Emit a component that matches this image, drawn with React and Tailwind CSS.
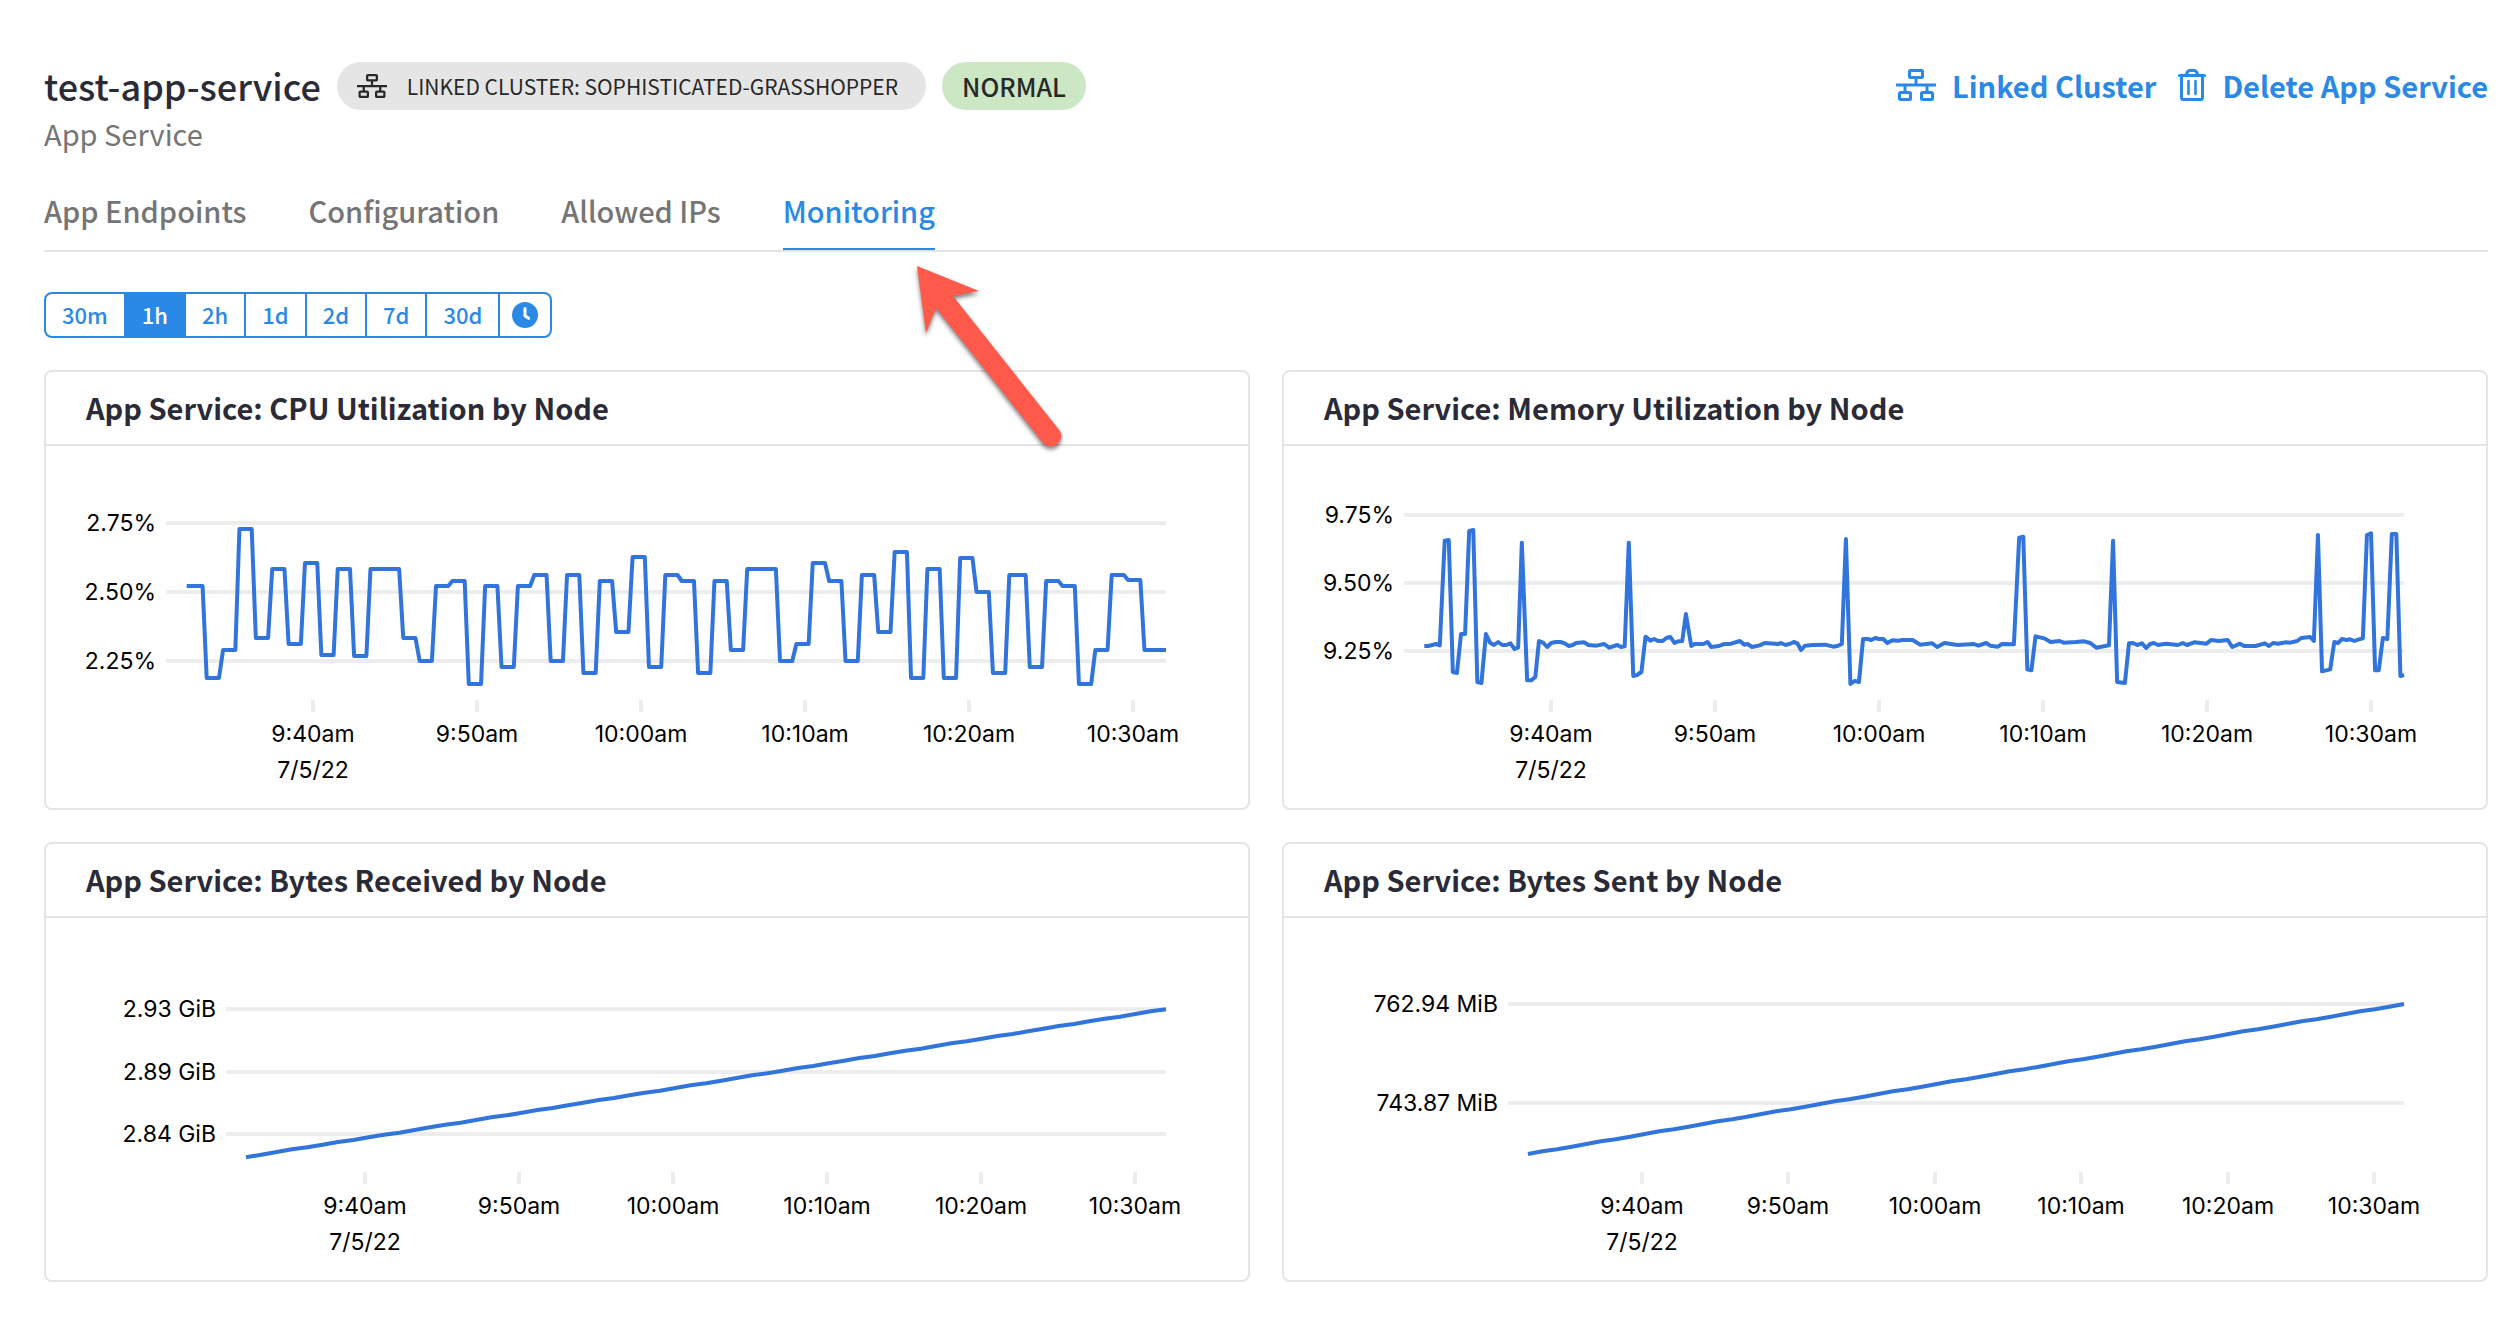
import React, { useState } from "react";

const GRID = "#ededed";
const LINE = "#3174dc";

const HOURS = ["9:40am", "9:50am", "10:00am", "10:10am", "10:20am", "10:30am"];

/* CPU readings: [level, number of 15-second samples] */
const CPU_RUNS = [
  [678, 4], [954, 4], [870, 4], [507, 4], [834, 4], [627, 4], [852, 4], [609, 4], [885, 4], [627, 4],
  [888, 4], [627, 8], [834, 4], [903, 4], [678, 4], [663, 4], [972, 4], [678, 4], [921, 4], [678, 4],
  [645, 4], [903, 4], [645, 4], [939, 4], [663, 4], [816, 4], [591, 4], [921, 4], [645, 4], [663, 4],
  [939, 4], [663, 4], [870, 4], [627, 8], [903, 4], [852, 4], [609, 4], [663, 4], [903, 4], [645, 4],
  [816, 4], [576, 4], [954, 4], [627, 4], [954, 4], [594, 4], [696, 4], [939, 4], [645, 5], [921, 4],
  [663, 4], [678, 4], [972, 4], [870, 4], [645, 4], [660, 4], [870, 6],
];

/* Memory readings: time, level pairs; the second list starts half an hour in */
const MEMORY_FIRST = [
  378, 858, 388, 858, 407, 852, 416, 856, 428, 542, 438, 540, 448, 936, 458, 939, 468, 822, 478, 822,
  488, 513, 498, 510, 508, 966, 518, 969, 529, 822, 539, 848, 549, 855, 559, 846, 569, 855, 579, 855,
  589, 850, 599, 867, 608, 862, 617, 548, 630, 961, 640, 961, 650, 951, 659, 843, 669, 848, 679, 861,
  689, 849, 700, 846, 712, 846, 722, 850, 732, 858, 742, 855, 750, 849, 770, 847, 780, 855, 800, 857,
  819, 852, 831, 863, 851, 855, 860, 861, 869, 859, 879, 548, 890, 948, 899, 945, 910, 936, 920, 830,
  932, 842, 941, 837, 951, 843, 962, 843, 971, 834, 981, 831, 991, 849, 1000, 844, 1010, 843, 1019, 762,
  1032, 858, 1040, 852, 1062, 852, 1072, 846, 1081, 861, 1100, 858, 1110, 853, 1130, 851, 1151, 843,
  1162, 854, 1170, 852, 1181, 861, 1200, 856, 1212, 849, 1245, 852, 1252, 849, 1263, 855, 1275, 851,
  1283, 846, 1292, 850, 1301, 870, 1311, 857, 1330, 855, 1360, 854, 1380, 860, 1392, 857, 1401, 852,
  1411, 537, 1422, 972, 1432, 963, 1443, 966, 1453, 837, 1465, 837, 1473, 840, 1483, 834, 1492, 837,
];
const MEMORY_SECOND = [
  8, 837, 18, 849, 30, 841, 45, 842, 55, 840, 80, 840, 98, 854, 128, 850, 140, 861, 158, 849, 190, 855,
  230, 852, 241, 857, 260, 849, 270, 857, 289, 860, 299, 852, 328, 853, 341, 533, 351, 530, 361, 928,
  371, 931, 381, 829, 402, 835, 418, 846, 440, 843, 450, 848, 480, 846, 500, 844, 515, 849, 530, 863,
  561, 856, 571, 542, 581, 966, 600, 969, 610, 850, 620, 849, 630, 855, 642, 850, 652, 864, 662, 852,
  671, 849, 681, 855, 700, 851, 730, 855, 742, 849, 752, 855, 770, 847, 800, 851, 811, 840, 830, 843,
  852, 840, 863, 861, 882, 851, 892, 858, 920, 858, 943, 850, 953, 858, 963, 849, 975, 851, 995, 847,
  1005, 848, 1022, 843, 1032, 834, 1054, 831, 1063, 843, 1073, 525, 1083, 934, 1103, 928, 1113, 846,
  1122, 849, 1132, 837, 1143, 840, 1152, 838, 1162, 843, 1173, 838, 1183, 835, 1193, 525, 1203, 520,
  1213, 931, 1222, 931, 1232, 834, 1243, 837, 1254, 522, 1265, 522, 1275, 948, 1284, 945,
];

const levelToY = (level) => level / 3 - 86;

function cpuPoints() {
  const step = 4.095;
  const points = [];
  let x = 144.3;
  CPU_RUNS.forEach(([level, count], i) => {
    const start = i === 0 ? 140.7 : x;
    points.push([start, levelToY(level)], [x + step * (count - 1), levelToY(level)]);
    x += step * count;
  });
  points[points.length - 1][0] = 1120;
  return points;
}

function memoryPoints() {
  const points = [];
  const add = (list, offset) => {
    for (let i = 0; i < list.length; i += 2) {
      points.push([list[i] / 2.45 + offset, levelToY(list[i + 1])]);
    }
  };
  add(MEMORY_FIRST, -14);
  add(MEMORY_SECOND, 596);
  return points;
}

/* Steadily growing counter, read at regular intervals and rounded to whole units */
function growthPoints([x1, y1], [x2, y2]) {
  const count = 60;
  return Array.from({ length: count + 1 }, (_, i) => [
    x1 + ((x2 - x1) * i) / count,
    Math.round((y1 + ((y2 - y1) * i) / count) * 1.5) / 1.5,
  ]);
}

const CHARTS = [
  {
    title: "App Service: CPU Utilization by Node",
    left: 120,
    ticks: [267, 431, 595, 759, 923, 1087],
    rows: [["2.75%", 77], ["2.50%", 146], ["2.25%", 215]],
    points: cpuPoints(),
  },
  {
    title: "App Service: Memory Utilization by Node",
    left: 120,
    ticks: [267, 431, 595, 759, 923, 1087],
    rows: [["9.75%", 69], ["9.50%", 137], ["9.25%", 205]],
    points: memoryPoints(),
  },
  {
    title: "App Service: Bytes Received by Node",
    left: 180,
    ticks: [319, 473, 627, 781, 935, 1089],
    rows: [["2.93 GiB", 91], ["2.89 GiB", 154], ["2.84 GiB", 216]],
    points: growthPoints([200, 239], [1120, 91]),
  },
  {
    title: "App Service: Bytes Sent by Node",
    left: 224,
    ticks: [358, 504, 651, 797, 944, 1090],
    rows: [["762.94 MiB", 86], ["743.87 MiB", 185]],
    points: growthPoints([244, 236], [1120, 86]),
  },
];

function Chart({ chart }) {
  return (
    <svg
      viewBox="0 0 1202 362"
      role="img"
      aria-label={chart.title}
      className="block h-auto w-full font-['Inter',sans-serif] text-[23px]"
    >
      {chart.rows.map(([label, y]) => (
        <g key={label}>
          <line x1={chart.left} x2="1120" y1={y} y2={y} stroke={GRID} strokeWidth="4" />
          <text x={chart.left - 10} y={y + 8} textAnchor="end" fill="#000">
            {label}
          </text>
        </g>
      ))}
      {chart.ticks.map((x, i) => (
        <g key={x}>
          <line x1={x} x2={x} y1="254" y2="266" stroke={GRID} strokeWidth="4" />
          <text x={x} y="296" textAnchor="middle" fill="#000">
            {HOURS[i]}
          </text>
        </g>
      ))}
      <text x={chart.ticks[0]} y="332" textAnchor="middle" fill="#000">
        7/5/22
      </text>
      <polyline
        points={chart.points.map((p) => p.join(",")).join(" ")}
        fill="none"
        stroke={LINE}
        strokeWidth="4"
        strokeLinejoin="round"
      />
    </svg>
  );
}

function NetworkIcon({ className }) {
  return (
    <svg viewBox="0 0 40 32" fill="none" stroke="currentColor" strokeWidth="3" className={className} aria-hidden="true">
      <rect x="13.5" y="1.5" width="13" height="7" rx="1" />
      <path d="M20 9v7M0 16h40M9 16v7M31 16v7" />
      <rect x="3.5" y="23.5" width="11" height="7" rx="1" />
      <rect x="25.5" y="23.5" width="11" height="7" rx="1" />
    </svg>
  );
}

function TrashIcon({ className }) {
  return (
    <svg viewBox="0 0 28 32" fill="none" stroke="currentColor" strokeWidth="3" className={className} aria-hidden="true">
      <path d="M1.5 6.5h25" strokeLinecap="round" />
      <path d="M8 6l1.6-3.2Q10.3 1.5 11.5 1.5h5q1.2 0 1.9 1.3L20 6" />
      <path d="M3.5 7v21.5q0 2 2 2h17q2 0 2-2V7" />
      <path d="M10.5 12v13M17.5 12v13" strokeWidth="2.6" strokeLinecap="round" />
    </svg>
  );
}

function ClockIcon({ className }) {
  return (
    <svg viewBox="0 0 26 26" className={className} aria-hidden="true">
      <circle cx="13" cy="13" r="13" fill="currentColor" />
      <path d="M13 6.5v7.2l3.6 2.6" fill="none" stroke="#fff" strokeWidth="3" strokeLinecap="round" strokeLinejoin="round" />
    </svg>
  );
}

const TABS = ["App Endpoints", "Configuration", "Allowed IPs", "Monitoring"];
const RANGES = ["30m", "1h", "2h", "1d", "2d", "7d", "30d"];

export default function App() {
  const [tab, setTab] = useState("Monitoring");
  const [range, setRange] = useState("1h");

  return (
    <div className="relative min-h-screen bg-white pt-[62px] pr-8 pb-9 pl-11 font-['Noto_Sans_CJK_SC',sans-serif] text-[29px] text-[#2b2b38]">
      <header className="flex items-start justify-between">
        <div>
          <div className="flex h-12 items-center gap-4">
            <h1 className="pb-0.5 text-[36px] leading-[46px] font-medium">test-app-service</h1>
            <div className="flex h-12 items-center gap-5 rounded-full bg-[#e5e5e5] pr-7 pl-5 text-[21px] text-[#282828]">
              <NetworkIcon className="h-6 w-[30px]" />
              <span className="leading-[48px]">LINKED CLUSTER: SOPHISTICATED-GRASSHOPPER</span>
            </div>
            <div className="flex h-12 items-center rounded-full bg-[#cbe7c4] px-5 text-[25px] leading-[48px] font-medium text-[#282828]">
              NORMAL
            </div>
          </div>
          <p className="mt-1 pb-[3px] leading-[38px] text-[#757575]">App Service</p>
        </div>
        <div className="flex h-[46px] items-center gap-[22px] font-bold text-[#2a89e6]">
          <a href="#linked-cluster" className="flex items-center gap-4 leading-[46px]">
            <NetworkIcon className="h-8 w-10" />
            Linked Cluster
          </a>
          <button type="button" className="flex items-center gap-4 leading-[46px]">
            <TrashIcon className="h-8 w-7" />
            Delete App Service
          </button>
        </div>
      </header>

      <nav className="mt-9 flex gap-[62px] border-b-2 border-[#e5e5e5]">
        {TABS.map((name) => (
          <button
            key={name}
            type="button"
            onClick={() => setTab(name)}
            className={
              name === tab
                ? "border-b-2 border-[#2a89e6] pb-[19px] leading-[38px] font-medium text-[#2a89e6]"
                : "border-b-2 border-transparent pb-[19px] leading-[38px] font-medium text-[#757575]"
            }
          >
            {name}
          </button>
        ))}
      </nav>

      <div className="mt-10 flex">
        <div className="flex h-[46px] divide-x-2 divide-[#2a89e6] overflow-hidden rounded-lg border-2 border-[#2a89e6] text-[22px] font-medium">
          {RANGES.map((name) => (
            <button
              key={name}
              type="button"
              onClick={() => setRange(name)}
              className={name === range ? "bg-[#2a89e6] px-4 pb-0.5 leading-10 text-white" : "px-4 pb-0.5 leading-10 text-[#2a89e6]"}
            >
              {name}
            </button>
          ))}
          <button type="button" aria-label="Custom range" className="px-3 text-[#2a89e6]">
            <ClockIcon className="size-[26px]" />
          </button>
        </div>
      </div>

      <main className="mt-8 grid grid-cols-2 gap-8">
        {CHARTS.map((chart) => (
          <section key={chart.title} className="rounded-lg border-2 border-[#e5e5e5]">
            <h2 className="border-b-2 border-[#e5e5e5] px-10 pb-0.5 leading-[70px] font-bold">{chart.title}</h2>
            <Chart chart={chart} />
          </section>
        ))}
      </main>

      <svg
        viewBox="0 0 176 208"
        className="pointer-events-none absolute top-[250px] left-[900px] h-[208px] w-[176px] drop-shadow-[0_3px_2px_rgba(0,0,0,0.5)]"
        aria-hidden="true"
      >
        <path d="M17 16L79 41L53 46L160 181A10.5 10.5 0 0 1 143 193L36 58L26 83Z" fill="#ff594b" />
      </svg>
    </div>
  );
}
